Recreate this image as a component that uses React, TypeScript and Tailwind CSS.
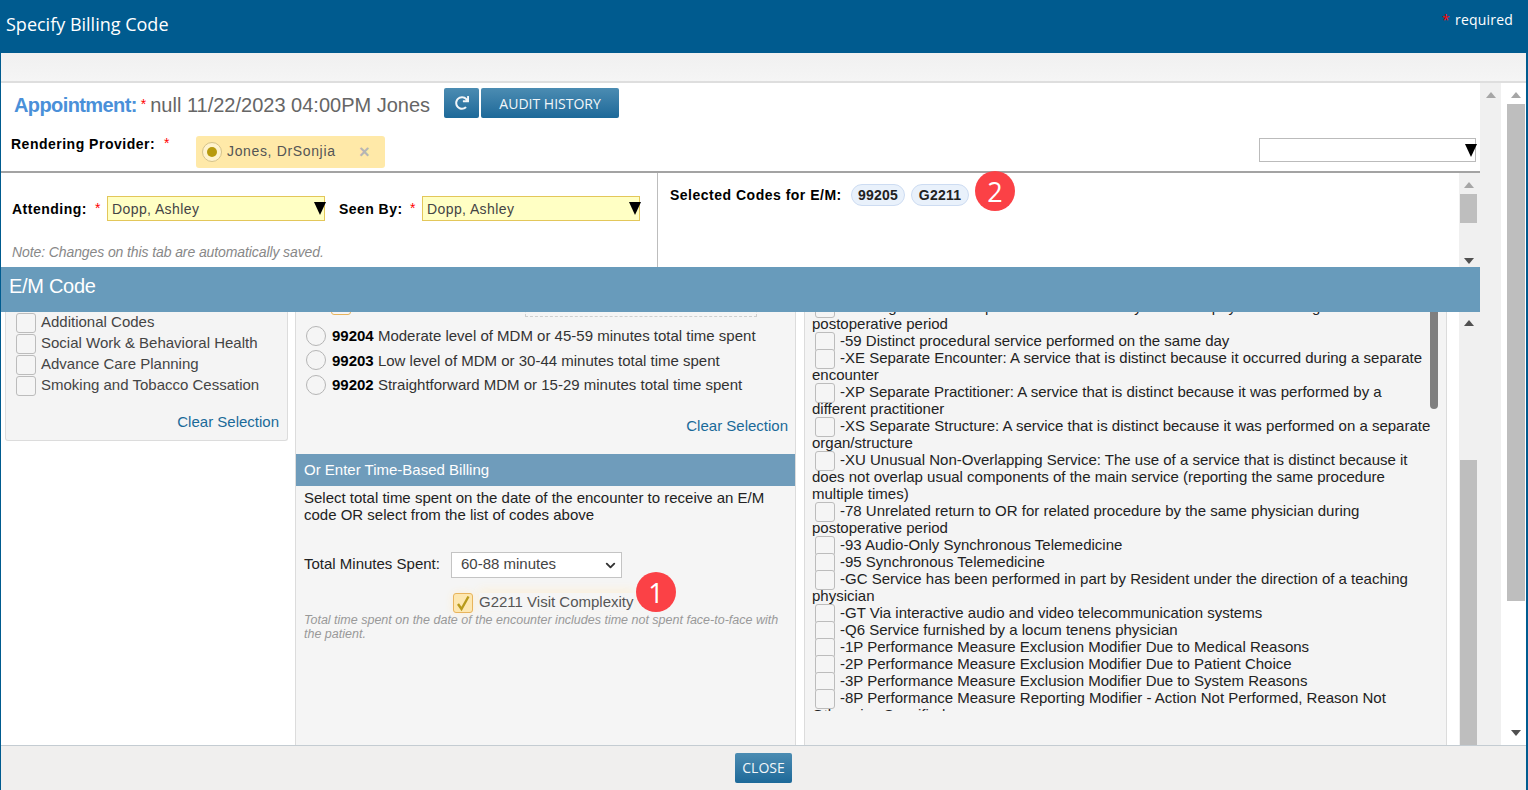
import React from "react";
import { FaRedo } from "react-icons/fa";
import { ChevronDown } from "lucide-react";

const Tri = ({ up, color = "#a6a6a6" }: { up?: boolean; color?: string }) => (
  <svg width="10" height="6" viewBox="0 0 10 6" className="block">
    <path d={up ? "M5 0L10 6H0Z" : "M0 0H10L5 6Z"} fill={color} />
  </svg>
);

const BlackTri = () => (
  <svg width="12" height="13" viewBox="0 0 12 13" className="absolute right-[-2px] top-[5px]">
    <path d="M0 0H12L6 13Z" fill="#000" />
  </svg>
);

const Star = () => <span className="text-[#f00] font-normal">*</span>;

const Box = ({ className = "" }: { className?: string }) => (
  <span className={"inline-block w-5 h-5 border border-[#bcbcbc] rounded-[3px] bg-[#f5f5f5] " + className} />
);

const YellowSelect = ({ value }: { value: string }) => (
  <div className="relative w-[218px] h-[25px] bg-[#ffffc4] border border-[#e3c75a] pl-[4px] pt-[1px] flex items-center text-[14px] text-[#444] tracking-[0.4px]">
    {value}
    <BlackTri />
  </div>
);

const Badge = ({ n, className }: { n: string; className: string }) => (
  <span
    className={
      "absolute w-10 h-10 rounded-full bg-[#fb4146] text-white flex items-center justify-center text-[27px] leading-none font-['Open_Sans',sans-serif] " +
      className
    }
  >
    {n}
  </span>
);

const left = ["Additional Codes", "Social Work & Behavioral Health", "Advance Care Planning", "Smoking and Tobacco Cessation"];

const radios = [
  ["99204", "Moderate level of MDM or 45-59 minutes total time spent"],
  ["99203", "Low level of MDM or 30-44 minutes total time spent"],
  ["99202", "Straightforward MDM or 15-29 minutes total time spent"],
];

const mods = [
  "-58 Staged or related procedure or service by the same physician during the postoperative period",
  "-59 Distinct procedural service performed on the same day",
  "-XE Separate Encounter: A service that is distinct because it occurred during a separate encounter",
  "-XP Separate Practitioner: A service that is distinct because it was performed by a different practitioner",
  "-XS Separate Structure: A service that is distinct because it was performed on a separate organ/structure",
  "-XU Unusual Non-Overlapping Service: The use of a service that is distinct because it does not overlap usual components of the main service (reporting the same procedure multiple times)",
  "-78 Unrelated return to OR for related procedure by the same physician during postoperative period",
  "-93 Audio-Only Synchronous Telemedicine",
  "-95 Synchronous Telemedicine",
  "-GC Service has been performed in part by Resident under the direction of a teaching physician",
  "-GT Via interactive audio and video telecommunication systems",
  "-Q6 Service furnished by a locum tenens physician",
  "-1P Performance Measure Exclusion Modifier Due to Medical Reasons",
  "-2P Performance Measure Exclusion Modifier Due to Patient Choice",
  "-3P Performance Measure Exclusion Modifier Due to System Reasons",
  "-8P Performance Measure Reporting Modifier - Action Not Performed, Reason Not Otherwise Specified",
];

const btn =
  "h-[30px] rounded-[2px] bg-gradient-to-b from-[#4b8cb2] to-[#1c6999] text-[#f2f6f9] text-[14px] font-['Open_Sans',sans-serif] flex items-center justify-center";

export default function App() {
  return (
    <div className="w-[1528px] h-[790px] overflow-hidden flex flex-col bg-white border-l border-r-2 border-[#005b8f] text-[15px] text-[#333] font-['Liberation_Sans',Arial,sans-serif]">
      <header className="h-[53px] shrink-0 -ml-px -mr-[2px] bg-[#005b8f] flex justify-between text-white font-['Open_Sans',sans-serif]">
        <div className="pl-[6px] pt-[12px] text-[18px] leading-[25px]">Specify Billing Code</div>
        <div className="pr-[15px] pt-[10px] text-[14px] leading-[20px] tracking-[0.2px]">
          <span className="text-[#f00] mr-[5px]">*</span>required
        </div>
      </header>
      <div className="h-[30px] shrink-0 bg-gradient-to-b from-[#f0f0f0] to-[#f5f5f5] border-b-2 border-[#dedede]" />

      <div className="flex-1 min-h-0 flex">
        <main className="w-[1479px] shrink-0 flex flex-col min-h-0">
          {/* Appointment */}
          <div className="h-[35px] shrink-0 pt-[5px] pl-[13px] flex items-center">
            <span className="text-[20px] font-bold text-[#4a90d9] tracking-[-0.6px] mt-[3px]">Appointment:</span>
            <span className="text-[14px] text-[#f00] ml-[4px] mt-[3px]">*</span>
            <span className="text-[20px] text-[#666] ml-[4px] mt-[3px]">null 11/22/2023 04:00PM Jones</span>
            <button className={btn + " w-[35px] ml-[14px]"}>
              <FaRedo size={14} />
            </button>
            <button className={btn + " w-[138px] ml-[2px]"}>AUDIT HISTORY</button>
          </div>

          {/* Provider */}
          <div className="h-[55px] shrink-0 pl-[10px] pr-[4px] flex justify-between border-b-2 border-[#a3a3a3]">
            <div className="flex items-start pt-[18px]">
              <span className="text-[14px] font-bold text-black tracking-[0.5px] w-[153px] mt-[-2px] leading-[20px]">Rendering Provider:</span>
              <span className="w-[32px] text-[14px] -mt-[3px]"><Star /></span>
              <div className="w-[189px] h-[32px] rounded-[3px] bg-[#ffe9a8] flex items-center pl-[6px] text-[14px] text-[#555] tracking-[0.65px]">
                <span className="w-[20px] h-[20px] rounded-full border border-[#d5c28a] bg-[#fff3cd] flex items-center justify-center">
                  <span className="w-[10px] h-[10px] rounded-full bg-[#b79a0e]" />
                </span>
                <span className="ml-[5px] w-[132px] -mt-[1px]">Jones, DrSonjia</span>
                <span className="text-[18px] font-bold text-[#b5b5b5]">×</span>
              </div>
            </div>
            <div className="relative w-[217px] h-[24px] mt-[20px] border border-[#bbb] bg-white">
              <BlackTri />
            </div>
          </div>

          {/* Attending + selected */}
          <div className="h-[94px] shrink-0 flex">
            <div className="w-[657px] shrink-0 border-r border-[#bdbdbd] pl-[11px] pt-[23px]">
              <div className="flex items-center">
                <span className="text-[14px] font-bold text-black tracking-[0.5px] w-[83px] mt-[2px]">Attending:</span>
                <span className="w-[12px] text-[14px]"><Star /></span>
                <YellowSelect value="Dopp, Ashley" />
                <span className="text-[14px] font-bold text-black tracking-[0.45px] ml-[14px] w-[71px] mt-[2px]">Seen By:</span>
                <span className="w-[12px] text-[14px]"><Star /></span>
                <YellowSelect value="Dopp, Ashley" />
              </div>
              <div className="mt-[22px] italic text-[14px] text-[#888] leading-[18px] tracking-[-0.1px]">Note: Changes on this tab are automatically saved.</div>
            </div>
            <div className="relative flex-1 flex">
              <div className="flex-1 flex items-start pl-[12px] pt-[11px] text-[14px]">
                <span className="font-bold text-black mr-[10px] leading-[22px] w-[171px] whitespace-nowrap tracking-[0.5px]">Selected Codes for E/M:</span>
                <span className="h-[22px] px-[4px] rounded-full bg-[#e9f1fb] border border-[#cddcf2] font-bold text-[#222] leading-[20px] w-[54px] text-center tracking-[0.2px]">99205</span>
                <span className="h-[22px] px-[4px] rounded-full bg-[#e9f1fb] border border-[#cddcf2] font-bold text-[#222] leading-[20px] w-[58px] text-center ml-[6px] tracking-[0.2px]">G2211</span>
              </div>
              <Badge n="2" className="left-[317px] top-[-2px]" />
              <div className="w-[21px] shrink-0 bg-[#f0f0f0] flex flex-col items-center pr-[2px] pt-[9px]">
                <Tri up />
                <div className="w-[17px] h-[29px] bg-[#bebebe] mt-[6px]" />
                <div className="mt-auto mb-[3px]"><Tri color="#505050" /></div>
              </div>
            </div>
          </div>

          {/* Band */}
          <div className="h-[45px] shrink-0 bg-[#689bbb] text-white text-[20px] pl-[8px] pb-[7px] flex items-center tracking-[-0.3px]">E/M Code</div>

          {/* Columns */}
          <div className="flex-1 min-h-0 flex">
            <div className="w-[294px] shrink-0 pl-[4px] pr-[7px] overflow-hidden">
              <div className="h-[129px] border-x border-b border-[#dcdcdc] rounded-b-[3px] bg-[#f4f4f4] pl-[10px] pr-[8px]">
                <div className="pt-[1px] flex flex-col gap-[1px]">
                  {left.map((t) => (
                    <div key={t} className="h-[20px] flex items-center text-[#444]">
                      <Box className="shrink-0" />
                      <span className="ml-[5px] -mt-[1px]">{t}</span>
                    </div>
                  ))}
                </div>
                <div className="mt-[16px] text-right text-[#1a6a99] leading-[20px]">Clear Selection</div>
              </div>
            </div>

            <div className="w-[501px] shrink-0 border-x border-[#dcdcdc] bg-[#f5f5f5] overflow-hidden">
              <div className="h-[22px] -mt-[17px] flex items-start pl-[35px]">
                <span className="w-[20px] h-[20px] border border-[#e8b45c] rounded-[3px]" />
                <span className="ml-[174px] w-[232px] h-[22px] border border-dashed border-[#cfcfcf]" />
              </div>
              <div className="mt-[6.5px]">
                {radios.map(([c, t]) => (
                  <div key={c} className="h-[24.5px] flex items-center pl-[10px]">
                    <span className="w-[20px] h-[20px] rounded-full border border-[#b5b5b5] bg-[#f5f5f5] shrink-0" />
                    <span className="ml-[6px] mt-[1px] text-[#333]"><b className="text-black">{c}</b> {t}</span>
                  </div>
                ))}
              </div>
              <div className="mt-[19px] pr-[7px] text-right text-[#1a6a99] leading-[20px]">Clear Selection</div>
              <div className="mt-[18px] h-[32px] bg-[#6f9cbb] text-white pl-[8px] flex items-center">Or Enter Time-Based Billing</div>
              <div className="pl-[8px] pr-[20px] pt-[3px] leading-[17px] text-[#222]">
                Select total time spent on the date of the encounter to receive an E/M code OR select from the list of codes above
              </div>
              <div className="relative mt-[29px] pl-[8px] flex items-center h-[26px]">
                <span className="w-[147px] text-[#222] -mt-[1px]">Total Minutes Spent:</span>
                <select defaultValue="60-88" className="appearance-none w-[171px] h-[26px] border border-[#c4c4c4] bg-white pl-[9px] pb-[2px] text-[#444] text-[15px]">
                  <option value="60-88">60-88 minutes</option>
                </select>
                <ChevronDown size={15} strokeWidth={3} className="absolute left-[307px] top-[6px] text-[#333]" />
              </div>
              <div className="relative mt-[15px] h-[20px] pl-[157px] flex items-center">
                <span className="relative w-[20px] h-[20px] border border-[#e8b45c] rounded-[3px] bg-[#fde7b0] shrink-0 shadow-[0_0_8px_#fbeed4]">
                  <svg viewBox="0 0 20 20" className="absolute -left-px -top-px w-[20px] h-[20px]">
                    <path d="M5 11l3.5 5L15.5 3.5" fill="none" stroke="#b89a1a" strokeWidth="2.4" />
                  </svg>
                </span>
                <span className="ml-[6px] -mt-[3px] text-[#555] shadow-[0_-4px_10px_#fbf1de] leading-[18px]">G2211 Visit Complexity</span>
                <Badge n="1" className="left-[340px] top-[-21px]" />
              </div>
              <div className="pl-[8px] pr-[8px] text-[12.5px] leading-[14px] italic text-[#999]">
                Total time spent on the date of the encounter includes time not spent face-to-face with the patient.
              </div>
            </div>

            <div className="w-[8px] shrink-0" />

            <div className="relative w-[643px] shrink-0 border-x border-[#dcdcdc] bg-[#f4f4f4]">
              <div className="h-[399px] overflow-hidden">
                <div className="-mt-[14px] pl-[7px] pr-[14px] leading-[17px] text-[#222]">
                  {mods.map((m) => (
                    <div key={m}>
                      <Box className="ml-[3px] mr-[5px] align-top -mb-[3px]" />
                      {m}
                    </div>
                  ))}
                </div>
              </div>
              <div className="absolute left-[625px] top-0 w-[8px] h-[97px] rounded-b-[4px] bg-[#7f7f7f]" />
            </div>

            <div className="w-[12px] shrink-0" />
            <div className="flex-1 bg-[#f0f0f0] flex flex-col items-center pr-[2px] pt-[8px]">
              <Tri up color="#505050" />
              <div className="w-[17px] flex-1 bg-[#bebebe] mt-[134px]" />
            </div>
          </div>
        </main>

        <div className="w-[21px] shrink-0 bg-[#f0f0f0] flex justify-center pt-[9px]">
          <Tri up />
        </div>
        <div className="flex-1 pl-[5px] pr-[1px] flex flex-col items-center pt-[9px]">
          <Tri up />
          <div className="w-[18px] h-[497px] bg-[#bebebe] mt-[6px]" />
          <div className="mt-auto mb-[9px]"><Tri color="#505050" /></div>
        </div>
      </div>

      <footer className="h-[45px] shrink-0 border-t border-[#c4ccd2] bg-[#f0efee] flex justify-center pt-[7px]">
        <button className={btn + " w-[57px] pb-[1px]"}>CLOSE</button>
      </footer>
    </div>
  );
}
